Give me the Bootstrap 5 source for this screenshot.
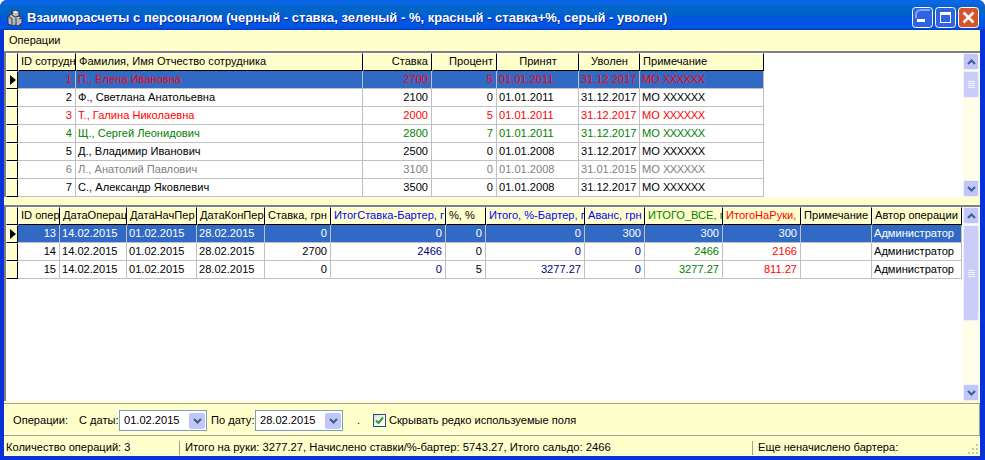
<!DOCTYPE html>
<html lang="ru">
<head>
<meta charset="UTF-8">
<title>Взаиморасчеты с персоналом</title>
<link href="https://cdn.jsdelivr.net/npm/bootstrap@5.3.2/dist/css/bootstrap.min.css" rel="stylesheet">
<style>
    html, body { height: 460px; overflow: hidden; background: #fff; }
    body { font-family: "Liberation Sans", Arial, sans-serif; font-size: 11.1px; color: #000; line-height: 1; }

    .xp-window { width: 985px; height: 460px; background: #0831d9; border-radius: 7px 7px 0 0; overflow: hidden; }
    .xp-title { height: 30px; padding: 5px 6px 0 7px; background: linear-gradient(#0a66e8 0, #0a66e4 4px, #0064c8 6px, #0064c8 14px, #0058e0 17px, #0054e4 27px, #0040c8 30px); }
    .xp-title-text { color: #fff; font-weight: 700; font-size: 13px; text-shadow: 1px 1px 0 #0a2a8a; white-space: nowrap; }
    .xp-btn { width: 21px; height: 21px; display: block; }
    .xp-btns { gap: 2px; }

    .xp-body { width: 976px; margin-left: 4px; height: 426px; background: #ffffcc; }
    .menu-strip { height: 21px; padding-left: 5px; font-size: 11px; }

    .grid-box { background: #fff; border-top: 2px solid #808080; border-left: 2px solid #808080; }
    .grid-top { height: 146px; }
    .grid-bottom { height: 196px; margin-top: 8px; }
    .grid-area { width: 957px; overflow: hidden; }
    .grid-tbl { table-layout: fixed; border-collapse: separate; border-spacing: 0; }
    .grid-tbl th, .grid-tbl td { height: 18px; padding: 0 2px; font-weight: 400; white-space: nowrap; overflow: hidden; border-right: 1px solid #c0c0c0; border-bottom: 1px solid #c0c0c0; }
    .grid-tbl th { background: #ffffcc; border-top: 1px solid #fff; border-left: 1px solid #fff; border-right: 1px solid #000; border-bottom: 1px solid #000; height: 18px; }
    .grid-tbl .ind { background: #ffffcc; padding: 0; border-top: 1px solid #fff; border-left: 1px solid #fff; border-right: 1px solid #000; border-bottom: 1px solid #000; }
    .grid-tbl .num { text-align: right; padding-right: 3px; }
    .grid-tbl .ctr { text-align: center; }
    .ind-arrow { display: block; width: 0; height: 0; margin-left: 3px; border-left: 6px solid #000; border-top: 5px solid transparent; border-bottom: 5px solid transparent; }
    .xx { letter-spacing: -.4px; margin-left: 3px; }

    .sel td:not(.ind) { background: #316ac5; color: #fff; }
    .c-red, .c-red td { color: #ff0000; }
    .c-green, .c-green td { color: #008000; }
    .c-gray, .c-gray td { color: #808080; }
    .sel.c-red td:not(.ind) { color: #ff0000; }
    .sel .c-navy, .sel .c-grn, .sel .c-rd { color: #fff; }
    .c-navy { color: #000080; }
    .c-grn { color: #008000; }
    .c-rd { color: #ff0000; }
    .h-blue { color: #0000ff; }

    .scroll-col { width: 17px; margin-left: 1px; background: #fdfde8; }
    .scroll-arrow { width: 16px; height: 17px; background: #c1c6f8; border: 1px solid #eef0ff; border-radius: 2px; }
    .scroll-thumb { width: 16px; background: #c9cdf8; border: 1px solid #eef0ff; border-radius: 2px; }
    .thumb-top { height: 27px; margin-top: 1px; }
    .thumb-bottom { height: 96px; margin-top: 1px; }
    .thumb-lines { width: 7px; height: 7px; background: repeating-linear-gradient(#f4f6ff 0, #f4f6ff 1px, #c9cdf8 1px, #c9cdf8 2px); }

    .filter-panel { height: 33px; margin-top: 2px; padding-top: 2px; border-top: 1px solid #a0a0a0; border-bottom: 1px solid #a0a0a0; border-right: 1px solid #a0a0a0; padding-left: 9px; white-space: nowrap; }
    .lbl-ops { width: 66px; }
    .lbl-from { width: 40px; }
    .lbl-to { width: 48px; padding-left: 4px; }
    .date-box { width: 88px; height: 21px; background: #fff; border: 1px solid #7f9db9; padding-left: 4px; }
    .date-btn { width: 16px; height: 16px; margin: 1px; background: #c1c6f8; border-radius: 2px; }
    .dot-lbl { width: 30px; padding-left: 14px; }
    .chk { width: 13px; height: 13px; background: linear-gradient(135deg, #d8d8d0, #fff 60%); border: 1px solid #1c5180; margin-right: 3px; }

    .status-strip { height: 20px; padding-left: 2px; padding-top: 3px; }
    .st-a { width: 173px; }
    .st-b { width: 573px; border-left: 1px solid #a0a0a0; padding-left: 5px; height: 14px; font-size: 11.25px; }
    .st-c { border-left: 1px solid #a0a0a0; padding-left: 5px; height: 14px; }
    .st-grip { position: absolute; right: 1px; bottom: 2px; }
    .status-wrap { position: relative; }
</style>
</head>
<body>
<div class="xp-window d-flex flex-column">
    <!-- заголовок окна -->
    <div class="xp-title d-flex align-items-center">
        <svg width="16" height="16" viewBox="0 0 16 16" class="flex-shrink-0 me-1">
            <path d="M5 1l4-1 3 2v4l3 2v5l-4 3-3-1-2 1-5-2V6l4-2z" fill="#b8bcc4" stroke="#30343c"/>
            <path d="M5 1v4l3 2 4-1M1 6l4 3v6M9 8v7M12 9l3-1" fill="none" stroke="#30343c"/>
            <path d="M6 2l3-1 2 1-3 1z" fill="#eef0f4"/>
        </svg>
        <div class="xp-title-text flex-grow-1">Взаиморасчеты с персоналом (черный - ставка, зеленый - %, красный - ставка+%, серый - уволен)</div>
        <div class="xp-btns d-flex">
            <svg class="xp-btn" viewBox="0 0 21 21"><rect x=".5" y=".5" width="20" height="20" rx="3" fill="#2f63e0" stroke="#fff"/><path d="M5 12h8v3H5z" fill="#fff"/><path d="M18 3H9Q4 3 4 8v3" fill="none" stroke="#7fa6f4" stroke-width="2"/></svg>
            <svg class="xp-btn" viewBox="0 0 21 21"><rect x=".5" y=".5" width="20" height="20" rx="3" fill="#2f63e0" stroke="#fff"/><rect x="5.500" y="5.500" width="10" height="10" fill="none" stroke="#fff"/><path d="M5 6.500h11M5 7.500h11" stroke="#fff"/></svg>
            <svg class="xp-btn" viewBox="0 0 21 21"><rect x=".5" y=".5" width="20" height="20" rx="3" fill="#d8532c" stroke="#fff"/><path d="M5.500 5.500l10 10M15.500 5.500l-10 10" stroke="#fff" stroke-width="2.600"/></svg>
        </div>
    </div>

    <div class="xp-body d-flex flex-column">
        <div class="menu-strip d-flex align-items-center">Операции</div>

        <!-- сотрудники -->
        <div class="grid-box grid-top d-flex">
            <div class="grid-area">
                <table class="grid-tbl" width="758">
                    <colgroup>
                        <col width="12"><col width="58"><col width="287"><col width="69"><col width="65"><col width="82"><col width="61"><col width="124">
                    </colgroup>
                    <thead>
                        <tr><th class="ind"></th><th>ID сотрудн</th><th>Фамилия, Имя Отчество сотрудника</th><th class="num">Ставка</th><th class="num">Процент</th><th class="ctr">Принят</th><th class="ctr">Уволен</th><th>Примечание</th></tr>
                    </thead>
                    <tbody id="staffRows"></tbody>
                </table>
            </div>
            <div class="scroll-col d-flex flex-column">
                <div class="scroll-arrow d-flex align-items-center justify-content-center"><svg width="9" height="6" viewBox="0 0 9 6"><path d="M1 5l3.500-3.500L8 5" fill="none" stroke="#3a5f8f" stroke-width="2"/></svg></div>
                <div class="scroll-thumb thumb-top d-flex align-items-center justify-content-center"><div class="thumb-lines"></div></div>
                <div class="flex-grow-1"></div>
                <div class="scroll-arrow d-flex align-items-center justify-content-center"><svg width="9" height="6" viewBox="0 0 9 6"><path d="M1 1l3.500 3.500L8 1" fill="none" stroke="#3a5f8f" stroke-width="2"/></svg></div>
            </div>
        </div>

        <!-- операции -->
        <div class="grid-box grid-bottom d-flex">
            <div class="grid-area">
                <table class="grid-tbl" width="956">
                    <colgroup>
                        <col width="12"><col width="42"><col width="67"><col width="70"><col width="68"><col width="66"><col width="115"><col width="40"><col width="99"><col width="60"><col width="78"><col width="78"><col width="71"><col width="90">
                    </colgroup>
                    <thead>
                        <tr><th class="ind"></th><th>ID опер</th><th>ДатаОперац</th><th>ДатаНачПер</th><th>ДатаКонПер</th><th>Ставка, грн</th><th class="h-blue">ИтогСтавка-Бартер, г</th><th>%, %</th><th class="h-blue">Итого, %-Бартер, г</th><th class="h-blue">Аванс, грн</th><th class="c-grn">ИТОГО_ВСЕ, г</th><th class="c-rd">ИтогоНаРуки,</th><th>Примечание</th><th>Автор операции</th></tr>
                    </thead>
                    <tbody id="opRows"></tbody>
                </table>
            </div>
            <div class="scroll-col d-flex flex-column">
                <div class="scroll-arrow d-flex align-items-center justify-content-center"><svg width="9" height="6" viewBox="0 0 9 6"><path d="M1 5l3.500-3.500L8 5" fill="none" stroke="#3a5f8f" stroke-width="2"/></svg></div>
                <div class="scroll-thumb thumb-bottom d-flex align-items-center justify-content-center"><div class="thumb-lines"></div></div>
                <div class="flex-grow-1"></div>
                <div class="scroll-arrow d-flex align-items-center justify-content-center"><svg width="9" height="6" viewBox="0 0 9 6"><path d="M1 1l3.500 3.500L8 1" fill="none" stroke="#3a5f8f" stroke-width="2"/></svg></div>
            </div>
        </div>

        <!-- фильтр по датам -->
        <div class="filter-panel d-flex align-items-center">
            <span class="lbl-ops">Операции:</span>
            <span class="lbl-from">С даты:</span>
            <div class="date-box d-flex align-items-center justify-content-between"><span>01.02.2015</span><span class="date-btn d-flex align-items-center justify-content-center"><svg width="9" height="6" viewBox="0 0 9 6"><path d="M1 1l3.500 3.500L8 1" fill="none" stroke="#3a5f8f" stroke-width="2"/></svg></span></div>
            <span class="lbl-to">По дату:</span>
            <div class="date-box d-flex align-items-center justify-content-between"><span>28.02.2015</span><span class="date-btn d-flex align-items-center justify-content-center"><svg width="9" height="6" viewBox="0 0 9 6"><path d="M1 1l3.500 3.500L8 1" fill="none" stroke="#3a5f8f" stroke-width="2"/></svg></span></div>
            <span class="dot-lbl">.</span>
            <span class="chk d-flex align-items-center justify-content-center"><svg width="9" height="9" viewBox="0 0 9 9"><path d="M1 4.500l2.500 2.500L8 1.500" fill="none" stroke="#21a121" stroke-width="2"/></svg></span>
            <span>Скрывать редко используемые поля</span>
        </div>

        <!-- строка состояния -->
        <div class="status-strip status-wrap d-flex align-items-center">
            <div class="st-a">Количество операций: 3</div>
            <div class="st-b d-flex align-items-center">Итого на руки: 3277.27, Начислено ставки/%-бартер: 5743.27, Итого сальдо: 2466</div>
            <div class="st-c d-flex align-items-center">Еще неначислено бартера:</div>
            <svg class="st-grip" width="11" height="11" viewBox="0 0 11 11"><path d="M8 1h2v2H8zM4 5h2v2H4zM8 5h2v2H8zM0 9h2v2H0zM4 9h2v2H4zM8 9h2v2H8z" fill="#c8c8b0"/></svg>
        </div>
    </div>
</div>

<script src="https://cdn.jsdelivr.net/npm/bootstrap@5.3.2/dist/js/bootstrap.bundle.min.js"></script>
<script>
    // сотрудники: id, фио, ставка, процент, принят, уволен, цвет
    const staff = [
        [1, 'П., Елена Ивановна', 2700, 5, '01.01.2011', '31.12.2017', 'c-red sel'],
        [2, 'Ф., Светлана  Анатольевна', 2100, 0, '01.01.2011', '31.12.2017', ''],
        [3, 'Т., Галина Николаевна', 2000, 5, '01.01.2011', '31.12.2017', 'c-red'],
        [4, 'Щ., Сергей Леонидович', 2800, 7, '01.01.2011', '31.12.2017', 'c-green'],
        [5, 'Д., Владимир Иванович', 2500, 0, '01.01.2008', '31.12.2017', ''],
        [6, 'Л., Анатолий Павлович', 3100, 0, '01.01.2008', '31.01.2015', 'c-gray'],
        [7, 'С., Александр Яковлевич', 3500, 0, '01.01.2008', '31.12.2017', '']
    ];
    const arrow = '<span class="ind-arrow"></span>';
    document.getElementById('staffRows').innerHTML = staff.map(r => `
        <tr class="${r[6]}"><td class="ind">${r[6].includes('sel') ? arrow : ''}</td><td class="num">${r[0]}</td><td>${r[1]}</td><td class="num">${r[2]}</td><td class="num">${r[3]}</td><td>${r[4]}</td><td>${r[5]}</td><td>МО<span class="xx">XXXXXX</span></td></tr>`).join('');

    // операции
    const ops = [
        [13, 0, 0, 0, 0, 300, 300, 300, 'sel'],
        [14, 2700, 2466, 0, 0, 0, 2466, 2166, ''],
        [15, 0, 0, 5, '3277.27', 0, '3277.27', '811.27', '']
    ];
    document.getElementById('opRows').innerHTML = ops.map(r => `
        <tr class="${r[8]}"><td class="ind">${r[8] ? arrow : ''}</td><td class="num">${r[0]}</td><td>14.02.2015</td><td>01.02.2015</td><td>28.02.2015</td><td class="num">${r[1]}</td><td class="num c-navy">${r[2]}</td><td class="num">${r[3]}</td><td class="num c-navy">${r[4]}</td><td class="num c-navy">${r[5]}</td><td class="num c-grn">${r[6]}</td><td class="num c-rd">${r[7]}</td><td></td><td>Администратор</td></tr>`).join('');
</script>
</body>
</html>
